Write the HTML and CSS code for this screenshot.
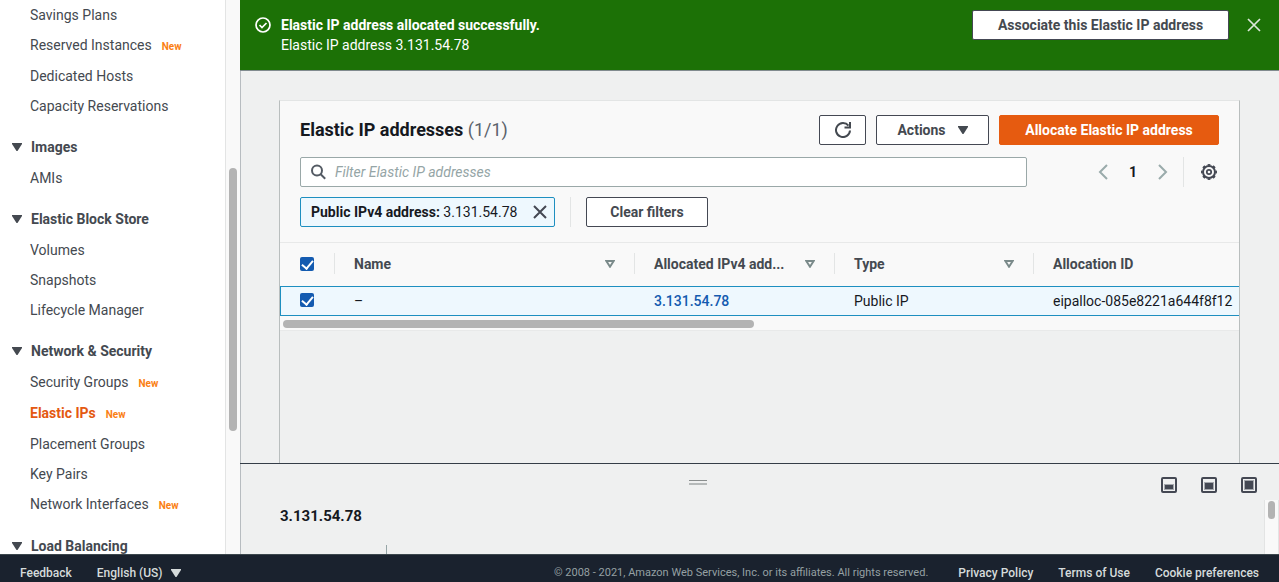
FILE: index.html
```html
<!DOCTYPE html>
<html lang="en">
<head>
<meta charset="utf-8">
<title>Elastic IP addresses</title>
<link rel="stylesheet" href="styles.css">
</head>
<body>
<div class="app">
  <div class="workspace">
    <aside class="sidebar">
      <nav class="nav" aria-label="EC2">
        <section class="nav-section">
          <a class="nav-link" href="#">Savings Plans</a>
          <a class="nav-link is-new" href="#">Reserved Instances<span class="new">New</span></a>
          <a class="nav-link" href="#">Dedicated Hosts</a>
          <a class="nav-link" href="#">Capacity Reservations</a>
        </section>
        <section class="nav-section">
          <button class="nav-head"><svg class="caret" viewBox="0 0 10 8"><path d="M0 0h10v1L5.500 8h-1L0 1z"/></svg>Images</button>
          <a class="nav-link" href="#">AMIs</a>
        </section>
        <section class="nav-section">
          <button class="nav-head"><svg class="caret" viewBox="0 0 10 8"><path d="M0 0h10v1L5.500 8h-1L0 1z"/></svg>Elastic Block Store</button>
          <a class="nav-link" href="#">Volumes</a>
          <a class="nav-link" href="#">Snapshots</a>
          <a class="nav-link" href="#">Lifecycle Manager</a>
        </section>
        <section class="nav-section">
          <button class="nav-head"><svg class="caret" viewBox="0 0 10 8"><path d="M0 0h10v1L5.500 8h-1L0 1z"/></svg>Network &amp; Security</button>
          <a class="nav-link is-new" href="#">Security Groups<span class="new">New</span></a>
          <a class="nav-link is-new is-active" href="#">Elastic IPs<span class="new">New</span></a>
          <a class="nav-link" href="#">Placement Groups</a>
          <a class="nav-link" href="#">Key Pairs</a>
          <a class="nav-link is-new" href="#">Network Interfaces<span class="new">New</span></a>
        </section>
        <section class="nav-section">
          <button class="nav-head"><svg class="caret" viewBox="0 0 10 8"><path d="M0 0h10v1L5.500 8h-1L0 1z"/></svg>Load Balancing</button>
        </section>
      </nav>
      <div class="nav-track"><div class="nav-thumb"></div></div>
    </aside>

    <main class="main">
      <div class="flash" role="status">
        <svg class="flash-icon" viewBox="0 0 16 16"><circle cx="8" cy="8" r="7"/><path d="M4.500 8l2.500 2.500 4.500-4.500"/></svg>
        <div class="flash-text">
          <div class="flash-title">Elastic IP address allocated successfully.</div>
          <div>Elastic IP address 3.131.54.78</div>
        </div>
        <button class="btn flash-btn">Associate this Elastic IP address</button>
        <button class="icon-btn flash-close" aria-label="Dismiss"><svg viewBox="0 0 14 14"><path d="M1 1l12 12M13 1L1 13"/></svg></button>
      </div>

      <div class="content">
        <section class="card">
          <header class="card-head">
            <div class="title-row">
              <h1 class="title">Elastic IP addresses <span class="count">(1/1)</span></h1>
              <button class="btn refresh" aria-label="Refresh"><svg viewBox="0 0 16 16"><path d="M15 8.500A7 7 0 1 1 13.500 3.700M15 0v5.500H9.500"/></svg></button>
              <button class="btn actions">Actions<svg class="caret" viewBox="0 0 10 8"><path d="M0 0h10v1L5.500 8h-1L0 1z"/></svg></button>
              <button class="btn primary">Allocate Elastic IP address</button>
            </div>
            <div class="filter-row">
              <div class="search">
                <svg viewBox="0 0 16 16"><circle cx="6" cy="6.500" r="5"/><path d="M9.700 10.200l4.500 4.500"/></svg>
                <input type="text" aria-label="Filter Elastic IP addresses" placeholder="Filter Elastic IP addresses">
              </div>
              <div class="pager">
                <button class="icon-btn page-arrow" aria-label="Previous page"><svg viewBox="0 0 10 16"><path d="M9 1L2 8l7 7"/></svg></button>
                <button class="icon-btn page-num">1</button>
                <button class="icon-btn page-arrow" aria-label="Next page"><svg viewBox="0 0 10 16"><path d="M1 1l7 7-7 7"/></svg></button>
              </div>
              <div class="settings">
                <button class="icon-btn gear" aria-label="Preferences"><svg viewBox="0 0 16 16"><circle cx="8" cy="8" r="6"/><circle class="teeth" cx="8" cy="8" r="7.200" pathLength="16"/><circle class="hub" cx="8" cy="8" r="2.200"/></svg></button>
              </div>
            </div>
            <div class="token-row">
              <div class="token"><b>Public IPv4 address:</b>&nbsp;3.131.54.78<button class="icon-btn token-close" aria-label="Remove filter"><svg viewBox="0 0 14 14"><path d="M1 1l12 12M13 1L1 13"/></svg></button></div>
              <div class="divider"></div>
              <button class="btn">Clear filters</button>
            </div>
          </header>

          <div class="table-wrap">
            <table class="table">
              <colgroup><col class="col-check"><col class="col-name"><col class="col-ip"><col class="col-type"><col class="col-id"></colgroup>
              <thead>
                <tr>
                  <th><input class="check" type="checkbox" aria-label="Select all" checked></th>
                  <th><div class="th">Name<svg class="sort" viewBox="0 0 10 8"><path d="M1.300 1h7.400L5 6.700z"/></svg></div></th>
                  <th><div class="th">Allocated IPv4 add...<svg class="sort" viewBox="0 0 10 8"><path d="M1.300 1h7.400L5 6.700z"/></svg></div></th>
                  <th><div class="th">Type<svg class="sort" viewBox="0 0 10 8"><path d="M1.300 1h7.400L5 6.700z"/></svg></div></th>
                  <th><div class="th">Allocation ID</div></th>
                </tr>
              </thead>
              <tbody>
                <tr>
                  <td><input class="check" type="checkbox" aria-label="Select 3.131.54.78" checked></td>
                  <td>–</td>
                  <td><a class="link" href="#">3.131.54.78</a></td>
                  <td>Public IP</td>
                  <td>eipalloc-085e8221a644f8f12</td>
                </tr>
              </tbody>
            </table>
          </div>
          <div class="table-track"><div class="table-thumb"></div></div>
        </section>
      </div>

      <section class="split">
        <div class="split-body">
          <div class="split-bar">
            <div class="grip"></div>
            <div class="split-tools">
              <button class="icon-btn" aria-label="Small panel"><svg viewBox="0 0 16 16"><rect x="1" y="1" width="14" height="14" rx="1"/><path class="halo" d="M3 7h10v6H3z"/><path class="fill" d="M4 8h8v4H4z"/></svg></button>
              <button class="icon-btn" aria-label="Medium panel"><svg viewBox="0 0 16 16"><rect x="1" y="1" width="14" height="14" rx="1"/><path class="halo" d="M3 5h10v8H3z"/><path class="fill" d="M4 6h8v6H4z"/></svg></button>
              <button class="icon-btn" aria-label="Full panel"><svg viewBox="0 0 16 16"><rect x="1" y="1" width="14" height="14" rx="1"/><path class="halo" d="M3 3h10v10H3z"/><path class="fill" d="M4 4h8v8H4z"/></svg></button>
            </div>
          </div>
          <div class="detail">
            <div class="detail-main">
              <h2 class="detail-title">3.131.54.78</h2>
              <div class="tab-edge"></div>
            </div>
            <div class="detail-track"><div class="detail-thumb"></div></div>
          </div>
        </div>
      </section>
    </main>
  </div>

  <footer class="footer">
    <a href="#">Feedback</a>
    <button class="lang">English (US)<svg class="caret" viewBox="0 0 10 8"><path d="M0 0h10v1L5.500 8h-1L0 1z"/></svg></button>
    <span class="copy">© 2008 - 2021, Amazon Web Services, Inc. or its affiliates. All rights reserved.</span>
    <a href="#">Privacy Policy</a>
    <a href="#">Terms of Use</a>
    <a href="#">Cookie preferences</a>
  </footer>
</div>
</body>
</html>
```
FILE: styles.css
```css
* { box-sizing: border-box; }
body {
  margin: 0;
  font: 14px/20px Roboto, "Noto Sans", sans-serif;
  color: #16191f;
  background: #eff0f0;
}
a { color: inherit; text-decoration: none; }
button { font: inherit; color: inherit; cursor: pointer; }
svg { display: block; flex: none; fill: none; stroke: currentColor; stroke-width: 2; }
h1, h2 { margin: 0; }

.app { height: 100vh; display: flex; flex-direction: column; overflow: hidden; }
.workspace { flex: 1; min-height: 0; display: flex; }

.caret { width: 10px; height: 8px; fill: currentColor; stroke: none; }
.icon-btn { display: flex; align-items: center; justify-content: center; padding: 0; border: 0; background: none; }

/* Sidebar */
.sidebar { width: 240px; flex: none; display: flex; overflow: hidden; background: #fff; color: #444950; }
.nav { flex: 1; display: flex; flex-direction: column; gap: 11px; }
.nav-section { display: flex; flex-direction: column; }
.nav-link { height: 30px; padding-left: 30px; line-height: 30px; white-space: nowrap; }
.nav-link.is-new { height: 31px; }
.nav-link.is-active { color: #e45911; font-weight: 700; }
.new { margin-left: 10px; font-size: 10px; font-weight: 700; color: #fa8013; }
.nav-head {
  display: flex; align-items: center; gap: 9px;
  height: 31px; padding: 0 0 2px 12px; border: 0; background: none;
  font-weight: 700; white-space: nowrap;
}
.nav-track { width: 15px; flex: none; border-left: 1px solid #e3e4e4; background: #f9f9f9; padding: 168px 3px 0; }
.nav-thumb { height: 263px; border-radius: 4px; background: #b3b3b3; }

/* Main column */
.main { flex: 1; min-width: 0; display: flex; flex-direction: column; border-left: 1px solid #b7bcc0; }

.flash {
  flex: none; display: flex; align-items: flex-start;
  margin-left: -1px; padding: 10px 18px 10px 15px; height: 71px;
  background: #1c7106; color: #fff; border-bottom: 1px solid #818b8f;
}
.flash-icon { width: 16px; height: 16px; margin: 7px 10px 0 0; stroke-width: 1.700; }
.flash-text { flex: 1; padding-top: 5px; }
.flash-title { font-weight: 700; }
.flash-close { width: 14px; height: 30px; margin-left: 18px; color: #dce8da; }
.flash-close svg { width: 14px; height: 14px; stroke-width: 1.700; }

.btn {
  display: flex; align-items: center; justify-content: center;
  height: 30px; padding: 0 20px;
  border: 1px solid #444853; border-radius: 2px;
  background: #fff; color: #444950; font-weight: 700; white-space: nowrap;
}
.flash-btn { min-width: 257px; }

.content { flex: 1; min-height: 0; padding: 29px 39px 0 38px; overflow: hidden; }
.card { height: 100%; overflow: hidden; border: 1px solid #b9bebe; border-top-color: #e3e5e5; border-bottom: 0; }
.card-head { padding: 14px 20px 15px; display: flex; flex-direction: column; gap: 12px; background: #f9f9f9; border-bottom: 1px solid #e8e9e9; }

.title-row { display: flex; align-items: center; gap: 10px; }
.title { flex: 1; font-size: 18px; line-height: 22px; font-weight: 700; }
.count { font-weight: 400; color: #5b626b; }
.refresh { padding: 0 14px; width: 47px; }
.refresh svg { width: 16px; height: 16px; }
.actions { gap: 12px; min-width: 113px; }
.primary { min-width: 220px; border-color: #e65b10; background: #e65b10; color: #fff; }

.filter-row { display: flex; align-items: center; }
.search { flex: 1; display: flex; align-items: center; height: 30px; padding-left: 10px; border: 1px solid #9aa8a8; border-radius: 2px; background: #fff; color: #545b64; }
.search svg { width: 16px; height: 16px; }
.search input { flex: 1; min-width: 0; padding: 0 8px; border: 0; outline: 0; background: none; font: inherit; }
.search input::placeholder { color: #95a5a6; font-style: italic; opacity: 1; }
.pager { display: flex; align-items: center; gap: 16px; margin: 0 15px 0 71px; color: #9aabab; }
.page-arrow { width: 10px; height: 30px; }
.page-arrow svg { width: 10px; height: 16px; }
.page-num { width: 18px; color: #16191f; font-weight: 700; }
.settings { height: 30px; display: flex; align-items: center; padding: 0 2px 0 17px; border-left: 1px solid #e3e5e5; }
.gear { color: #444853; }
.gear svg { width: 16px; height: 16px; }
.teeth { stroke-width: 1.600; stroke-dasharray: 1 1; stroke-dashoffset: 0.500; }
.hub { stroke-width: 1.700; }

.token-row { display: flex; align-items: center; gap: 15px; margin-top: -2px; }
.token { display: flex; align-items: center; height: 30px; min-width: 255px; padding: 0 7px 0 10px; border: 1px solid #1e8fc0; border-radius: 2px; background: #eef8fe; white-space: nowrap; }
.token-close { width: 14px; margin-left: auto; color: #444853; }
.token-close svg { width: 14px; height: 14px; }
.divider { width: 1px; height: 30px; background: #e3e5e5; }
.token-row .btn { min-width: 122px; }

/* Table */
.table-wrap { overflow: hidden; background: #f9f9f9; }
.table { width: 100%; min-width: 959px; table-layout: fixed; border-collapse: separate; border-spacing: 0; }
.col-check { width: 54px; }
.col-name { width: 300px; }
.col-ip { width: 200px; }
.col-type { width: 199px; }
.table th, .table td { padding: 0 0 0 20px; text-align: left; white-space: nowrap; }
.table th { height: 43px; padding-bottom: 2px; color: #444950; }
.th { position: relative; display: flex; align-items: center; justify-content: space-between; height: 21px; padding-right: 19px; }
.th::before { content: ""; position: absolute; left: -20px; top: 0; bottom: 0; width: 1px; background: #e3e5e5; }
.sort { width: 10px; height: 8px; color: #7a8a8a; }
.table td { height: 30px; overflow: hidden; background: #eef8fe; border-top: 1px solid #1e8fc0; border-bottom: 1px solid #1e8fc0; }
.table td:first-child { padding: 0 0 2px 19px; border-left: 1px solid #1e8fc0; }
.link { color: #145bb0; font-weight: 500; }
.check {
  appearance: none; display: block; width: 14px; height: 14px; margin: 0;
  border-radius: 2px; background: #145bb0;
}
.check::before { content: ""; display: block; width: 5px; height: 9px; margin: 0 auto; border: solid #fff; border-width: 0 2px 2px 0; transform: translateY(1px) rotate(40deg); }
.table-track { height: 15px; padding: 4px 3px 3px; background: #f9f9f9; border-bottom: 1px solid #e8e9e9; }
.table-thumb { width: 471px; height: 8px; border-radius: 4px; background: #b3b3b3; }

/* Split panel */
.split { height: 91px; flex: none; margin-left: -1px; border-top: 1px solid #343d47; }
.split-body { height: 100%; display: flex; flex-direction: column; border-left: 1px solid #b7bcc0; overflow: hidden; }
.split-bar { flex: none; height: 36px; display: grid; grid-template-columns: 1fr 18px 1fr; }
.grip { grid-column: 2; width: 18px; height: 5px; margin: 16px 0 0 -62px; border-top: 1px solid #8a8e8e; border-bottom: 2px solid #b5b9b9; }
.split-tools { grid-column: 3; display: flex; justify-content: flex-end; gap: 24px; padding: 13px 22px 0 0; color: #444853; }
.split-tools svg { width: 16px; height: 16px; }
.split-tools .icon-btn { height: 16px; }
.fill { fill: currentColor; stroke: none; }
.halo { fill: #a5a8ad; stroke: none; }
.detail { flex: 1; min-height: 0; display: flex; }
.detail-main { flex: 1; padding: 6px 0 0 39px; }
.detail-title { font-size: 15px; line-height: 20px; }
.tab-edge { width: 107px; height: 12px; margin-top: 19px; border-right: 1px solid #95a5a6; }
.detail-track { width: 15px; flex: none; padding: 1px 3px; background: #f9f9f9; border-left: 1px solid #e3e4e4; border-right: 1px solid #e3e4e4; }
.detail-thumb { height: 18px; border-radius: 4px; background: #b3b3b3; }

/* Footer */
.footer {
  flex: none; height: 28px; display: flex; align-items: center; gap: 25px; padding: 8px 20px 0;
  border-top: 1px solid #3c474d; background: #1a222e; color: #d5dbdb; font-size: 12px; font-weight: 500; white-space: nowrap;
}
.lang { display: flex; align-items: center; gap: 8px; padding: 0; border: 0; background: none; }
.copy { margin: 0 5px 0 auto; color: #95a0a3; font-size: 11px; font-weight: 400; }
```
